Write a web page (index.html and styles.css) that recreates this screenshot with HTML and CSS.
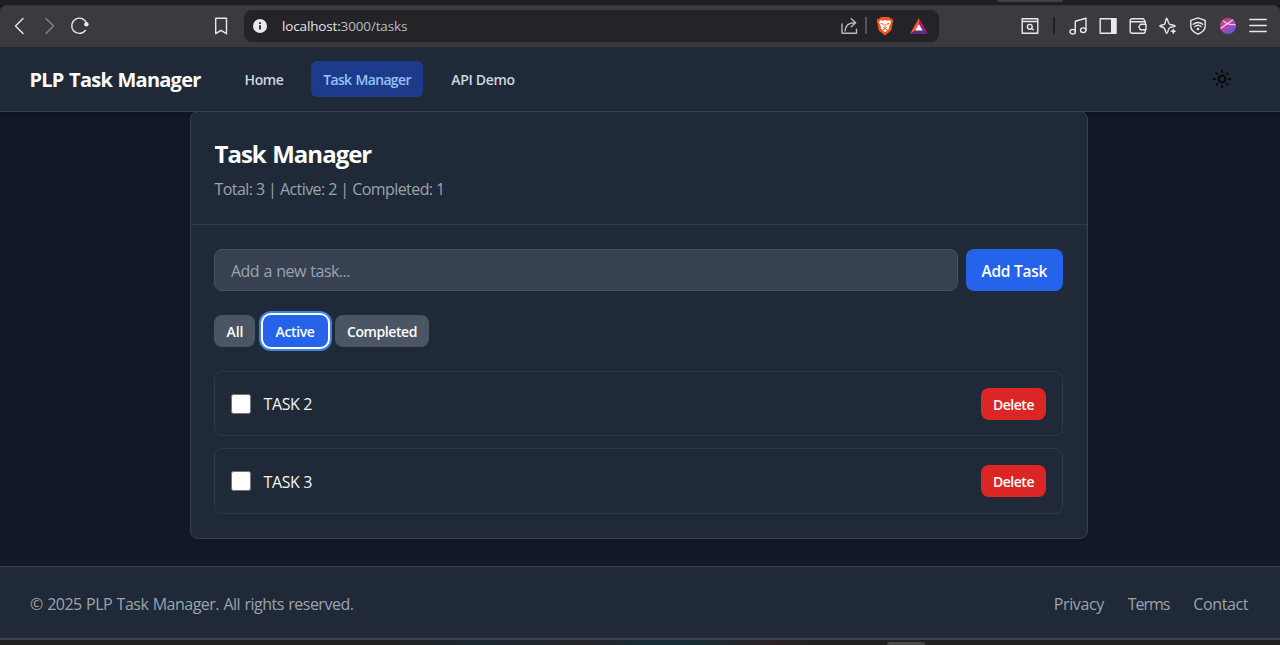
FILE: index.html
```html
<!DOCTYPE html>
<html lang="en">
<head>
<meta charset="utf-8">
<title>PLP Task Manager</title>
<link rel="stylesheet" href="styles.css">
</head>
<body>
<div class="screen">
  <div class="tabstrip"><span class="tab-edge"></span></div>
  <div class="toolbar">
    <div class="tb-nav">
      <svg width="20" height="22" viewBox="0 0 20 22"><path d="M14 3.500 6.500 11l7.500 7.500" class="ln"/></svg>
      <svg width="20" height="22" viewBox="0 0 20 22"><path d="M7 3.500 14.500 11 7 18.500" class="ln dim"/></svg>
      <svg width="22" height="22" viewBox="0 0 22 22"><path d="M16.300 15.500A7.600 7.600 0 1 1 17.600 8.500" class="ln"/><circle cx="17.400" cy="9.300" r="2.200" class="fl"/></svg>
    </div>
    <svg class="bookmark" width="16" height="22" viewBox="0 0 16 22"><path d="M2.700 3.200h10.800v15.500L8 15.300l-5.300 3.400z" class="ln"/></svg>
    <div class="address">
      <svg width="14" height="14" viewBox="0 0 14 14"><circle cx="7" cy="7" r="7" class="fl"/><path d="M7 6.300v4.200M7 3.200v1.700" class="info"/></svg>
      <span class="url">localhost:<span class="path">3000/tasks</span></span>
      <svg class="share" width="18" height="18" viewBox="0 0 18 18"><path d="M2 7v9.200h14.500v-4M5 14c.5-5 3.500-8 9-8.200M11.200 1.700l4.500 4.100-4.500 4" class="ln soft"/></svg>
      <span class="sep"></span>
      <svg class="lion" width="18" height="20" viewBox="0 0 18 20"><path d="M5 1h8l1.500 1.500 2 .2.800 3-.7 1.300-1.300 7.500L9 19.500 2.700 14.500 1.400 7 .7 5.700l.8-3 2-.2z" fill="#f1561d"/><path d="m4 4.300 3.200.4L9 4l1.800.7 3.200-.4 1 2.200-2 4.500.2 1.500L9 16.300l-4.200-3.800L5 11 3 6.500z" fill="#fff"/><path d="m4.700 7.400 3 1M13.300 7.400l-3 1M9 8v3M7.200 11.300 9 12.500l1.800-1.200M6.500 14l2.500-1.300 2.500 1.300" fill="none" stroke="#f1561d" stroke-width="1"/></svg>
      <svg class="bat" width="18" height="16" viewBox="0 0 18 16"><path d="M9 0 0 16l9-6z" fill="#ff5a36"/><path d="m9 0 9 16-9-6z" fill="#9e1f7d"/><path d="M0 16h18l-9-6z" fill="#5b2b91"/><path d="m9 6.200 3.700 6.300H5.300z" fill="#fff"/></svg>
    </div>
    <div class="tb-tools">
      <svg class="find" width="18" height="18" viewBox="0 0 18 18"><path d="M1.200 1.700h15.600v14.600H1.200zM1.200 4.500h15.600" class="ln"/><circle cx="8.800" cy="9.800" r="2.400" class="ln"/><path d="m10.500 11.500 1.800 1.300" class="ln"/></svg>
      <span class="sep dark"></span>
      <svg class="t1" width="18" height="18" viewBox="0 0 18 18"><path d="M6.300 14.500V4.200L17 1.300v11.800" class="ln"/><ellipse cx="3.700" cy="14.700" rx="2.700" ry="2.300" class="ln"/><ellipse cx="14.200" cy="13.200" rx="2.700" ry="2.300" class="ln"/></svg>
      <svg width="18" height="18" viewBox="0 0 18 18"><path d="M1.200 1.700h15.600v14.600H1.200z" class="ln"/><path d="M12 1h5.500v16H12z" class="fl"/></svg>
      <svg width="18" height="18" viewBox="0 0 18 18"><path d="M16.200 6V4.500L14.500 1.800H2.500L1.200 3v12l1.300 1.300h12.500l1.200-1.300V13M1.500 4.700h14.700v2M17 7.200h-5.500L9.800 10l1.700 2.800H17z" class="ln"/></svg>
      <svg width="18" height="18" viewBox="0 0 18 18"><path d="M7.700 1.300c.8 0 1.300 5.200 3 6s5.500.8 5.500 1.600-4.500 1-5.700 1.900-1.800 5.700-2.800 5.700-1.500-4.500-2.500-5.500S.8 9.800.8 8.900s4-.8 4.800-1.600 1.200-6 2.100-6z" class="ln"/><path d="m14.300 11.300 1 2 2.200 1-2.200 1-1 2.200-1-2.200-2.100-1 2.100-1z" class="fl"/></svg>
      <svg width="18" height="18" viewBox="0 0 18 18"><path d="m9 .9 7.200 2.400v6c0 4-3.500 6.300-7.200 7.900-3.700-1.600-7.200-3.900-7.200-7.900v-6z" class="ln"/><path d="M4.300 7.300c2.700-2.400 6.700-2.400 9.400 0M6 9.500c1.700-1.500 4.300-1.500 6 0" class="ln"/><circle cx="9" cy="12" r="1.300" class="fl"/></svg>
      <svg width="18" height="18" viewBox="0 0 18 18"><defs><linearGradient id="orb" x1=".1" y1="0" x2=".8" y2="1"><stop offset="0" stop-color="#d63b78"/><stop offset=".45" stop-color="#bd42a9"/><stop offset="1" stop-color="#4b60e0"/></linearGradient></defs><circle cx="9" cy="9" r="8" fill="url(#orb)"/><path d="M1.500 11.500 14 2.800M4 3.500c3 3.500 7 4.500 12.700 4.300" fill="none" stroke="#f3d9f2" stroke-width="1.100"/></svg>
      <svg width="18" height="18" viewBox="0 0 18 18"><path d="M.8 2.500h16.400M.8 8.500h16.400M.8 14.500h16.400" class="ln"/></svg>
    </div>
  </div>

  <nav class="nav">
    <div class="brand">PLP Task Manager</div>
    <div class="links">
      <a class="link home">Home</a>
      <a class="link current">Task Manager</a>
      <a class="link demo">API Demo</a>
    </div>
    <svg class="sun" width="20" height="20" viewBox="0 0 20 20"><circle cx="10" cy="10" r="3.400"/><path d="M10 1v2.700M10 16.300V19M1 10h2.700M16.300 10H19M3.900 3.900l1.700 1.700M14.400 14.400l1.700 1.700M3.900 16.100l1.700-1.700M14.400 5.600l1.700-1.700"/></svg>
  </nav>

  <main class="main">
    <section class="card">
      <header class="card-head">
        <h1 class="title">Task Manager</h1>
        <p class="stats">Total: 3 | Active: 2 | Completed: 1</p>
      </header>
      <div class="card-body">
        <div class="add">
          <div class="input">Add a new task...</div>
          <button class="btn primary">Add Task</button>
        </div>
        <div class="filters">
          <button class="btn small all">All</button>
          <button class="btn small active">Active</button>
          <button class="btn small completed">Completed</button>
        </div>
        <div class="tasks">
          <div class="task"><span class="check"></span><span class="name">TASK 2</span><button class="btn small delete">Delete</button></div>
          <div class="task last"><span class="check"></span><span class="name">TASK 3</span><button class="btn small delete">Delete</button></div>
        </div>
      </div>
    </section>
  </main>

  <footer class="footer">
    <span class="copy">© 2025 PLP Task Manager. All rights reserved.</span>
    <div class="foot-links"><a>Privacy</a><a class="terms">Terms</a><a>Contact</a></div>
  </footer>
  <div class="taskbar"><span class="task-edge"></span></div>
</div>
</body>
</html>
```
FILE: styles.css
```css
* { box-sizing: border-box; }
body { margin: 0; background: #111827; font-family: "Open Sans", "Noto Sans", sans-serif; font-size: 15px; }
h1, p { margin: 0; }
span, a, div, button { white-space: nowrap; }
svg { display: block; flex: none; }
.screen { width: 1280px; height: 645px; overflow: hidden; display: flex; flex-direction: column; }

.tabstrip { height: 5px; flex: none; background: #1f1e23; display: flex; }
.tab-edge { width: 66px; height: 2px; margin-left: 997px; background: #414044; border-radius: 0 0 3px 3px; }
.toolbar { height: 42px; flex: none; background: #3b3a3e; border-top: 1px solid #343337; border-radius: 6px 6px 0 0; display: flex; align-items: center; padding-bottom: 2px; }
.tb-nav { display: flex; gap: 10px; padding-left: 9px; width: 213px; }
.address { width: 695px; height: 32px; margin-left: 15px; background: #242327; border-radius: 8px; display: flex; align-items: center; padding-left: 9px; }
.ln { fill: none; stroke: #e9e9ec; stroke-width: 1.4; stroke-linejoin: round; stroke-linecap: round; }
.ln.dim { stroke: #858488; }
.ln.soft { stroke: #b9b8bc; }
.fl { fill: #e9e9ec; }
.info { stroke: #242327; stroke-width: 1.8; }
.url { margin-left: 15px; width: 559px; font-size: 13.5px; letter-spacing: -.15px; color: #e4e4e7; }
.path { color: #bdbcc0; }
.share { margin-left: -1px; }
.sep { width: 2px; height: 17px; margin-left: 7px; background: #55545a; }
.sep.dark { background: #212024; }
.lion { margin-left: 9px; }
.bat { margin-left: 16px; }
.tb-tools { display: flex; align-items: center; gap: 12px; margin-left: 82px; }
.tb-tools .sep { margin: 0 2px; }

.nav { height: 65px; flex: none; background: #1f2937; border-bottom: 1px solid #374151; box-shadow: 0 4px 6px rgba(0,0,0,.15); display: flex; align-items: center; padding: 0 48px 0 29.5px; }
.brand { width: 203.5px; padding-top: 2px; font-size: 20px; font-weight: 700; letter-spacing: -.76px; word-spacing: 1px; color: #fff; line-height: 28px; }
.links { display: flex; gap: 16px; flex: 1; }
.link { height: 36px; line-height: 38px; border-radius: 6px; color: #d1d5db; font-size: 14px; font-weight: 600; text-align: center; }
.home { width: 62px; letter-spacing: -.4px; }
.current { width: 112px; letter-spacing: -.65px; word-spacing: 1px; background: #1e3a8a; color: #93c5fd; }
.demo { width: 88px; letter-spacing: -.3px; }
.sun { fill: none; stroke: #05070b; stroke-width: 2; }

.main { flex: none; height: 455px; margin-top: -1px; padding-left: 190px; }
.card { position: relative; width: 898px; height: 427.5px; background: #1f2937; border: 1px solid #374151; border-radius: 8px; box-shadow: 0 1px 3px rgba(0,0,0,.2); }
.card-head { height: 113px; border-bottom: 1px solid #2f3b4a; padding: 26px 23.5px 0; }
.title { font-size: 24px; line-height: 32px; font-weight: 700; letter-spacing: -1px; word-spacing: 1.3px; color: #fff; }
.stats { margin-top: 7px; font-size: 16px; line-height: 24px; letter-spacing: -.57px; color: #9ca3af; }
.card-body { padding: 24px 24px 0 23px; }
.add { display: flex; gap: 8px; }
.input { flex: 1; height: 42px; background: #374151; border: 1px solid #465162; border-radius: 8px; padding: 2px 0 0 16px; font-size: 16px; letter-spacing: -.53px; word-spacing: .8px; color: #9ca3af; display: flex; align-items: center; }
.btn { border: 0; padding: 0; border-radius: 8px; color: #fff; font-family: inherit; font-weight: 600; text-align: center; }
.primary { width: 97.5px; height: 42px; padding-top: 2px; background: #2563eb; font-size: 15.5px; letter-spacing: -.27px; }
.filters { display: flex; gap: 8px; margin-top: 24px; }
.small { height: 32px; padding-top: 1px; font-size: 14px; letter-spacing: -.4px; background: #4b5563; }
.all { width: 41px; padding-left: 1px; letter-spacing: -.1px; }
.filters .active { width: 65px; padding-right: 1px; background: #2563eb; box-shadow: 0 0 0 2px #fff, 0 0 0 4px #3b82e6; }
.completed { width: 94px; margin-left: -1px; }
.tasks { display: flex; flex-direction: column; gap: 12px; margin-top: 24px; }
.task { height: 65px; border: 1px solid #2e3a49; border-radius: 8px; display: flex; align-items: center; padding: 0 16px; }
.task.last { height: 66px; }
.check { width: 20px; height: 20px; background: #fff; border: 1px solid #767676; border-radius: 2.5px; }
.name { flex: 1; padding-top: 1px; margin-left: 12.5px; font-size: 16px; letter-spacing: -.4px; color: #f3f4f6; }
.delete { width: 65px; letter-spacing: -.5px; background: #dc2626; }

.footer { height: 72px; flex: none; background: #1f2937; border-top: 1px solid #374151; display: flex; align-items: center; justify-content: space-between; padding: 3px 32px 0 30px; font-size: 16px; letter-spacing: -.4px; color: #9ca3af; }
.copy { letter-spacing: -.5px; word-spacing: .7px; }
.foot-links { display: flex; gap: 24px; }
.terms { letter-spacing: -1.05px; }
.taskbar { height: 7px; flex: none; border-top: 2px solid #3f4447; background: linear-gradient(90deg, #202122 0, #202122 400px, #1b2730 480px, #242529 590px, #142c38 660px, #182c31 700px, #2b2127 765px, #202122 810px); display: flex; align-items: flex-end; }
.task-edge { width: 38px; height: 3px; margin-left: 887px; border-radius: 3px 3px 0 0; background: #48494b; }
```
